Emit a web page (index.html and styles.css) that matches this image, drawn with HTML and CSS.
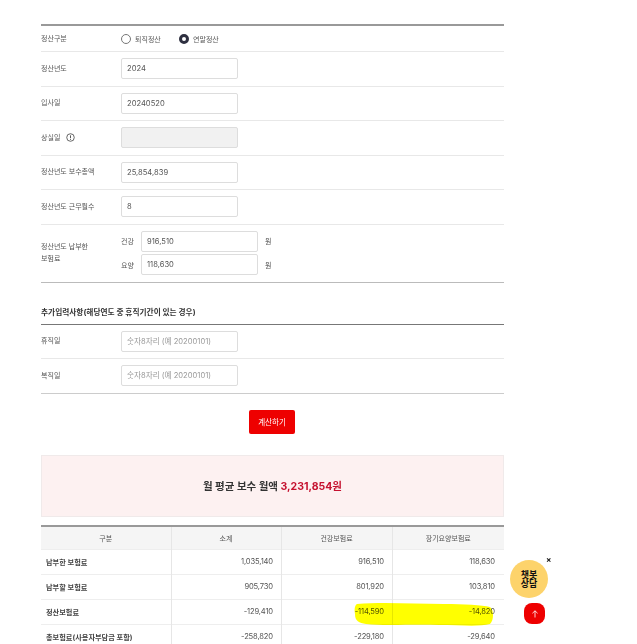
FILE: index.html
```html
<!DOCTYPE html>
<html lang="ko">
<head>
    <meta charset="UTF-8">
    <meta name="viewport" content="width=device-width, initial-scale=1.0">
    <title>보수월액 계산</title>
    <link rel="stylesheet" href="styles.css">
</head>
<body>
    <div class="container">
        <div class="form-table">
            <div class="form-row first-row">
                <div class="label">정산구분</div>
                <div class="field radios">
                    <span class="radio"></span><span class="radio-text">퇴직정산</span>
                    <span class="radio checked"></span><span class="radio-text">연말정산</span>
                </div>
            </div>
            <div class="form-row">
                <div class="label">정산년도</div>
                <div class="field"><input class="text-input" value="2024"></div>
            </div>
            <div class="form-row">
                <div class="label">입사일</div>
                <div class="field"><input class="text-input" value="20240520"></div>
            </div>
            <div class="form-row">
                <div class="label">상실일
                    <svg class="info-icon" viewBox="0 0 10 10">
                        <circle cx="5" cy="5" r="4.2" fill="none" stroke="#444" stroke-width="0.9"/>
                        <path d="M5 2.6V5.8M5 6.7V7.6" stroke="#444" stroke-width="1"/>
                    </svg>
                </div>
                <div class="field"><input class="text-input disabled" disabled></div>
            </div>
            <div class="form-row">
                <div class="label">정산년도 보수총액</div>
                <div class="field"><input class="text-input" value="25,854,839"></div>
            </div>
            <div class="form-row">
                <div class="label">정산년도 근무월수</div>
                <div class="field"><input class="text-input" value="8"></div>
            </div>
            <div class="form-row tall-row">
                <div class="label">정산년도 납부한<br>보험료</div>
                <div class="field pair-list">
                    <div class="pair">
                        <span class="pair-name">건강</span>
                        <input class="text-input" value="916,510">
                        <span class="unit">원</span>
                    </div>
                    <div class="pair">
                        <span class="pair-name">요양</span>
                        <input class="text-input" value="118,630">
                        <span class="unit">원</span>
                    </div>
                </div>
            </div>
        </div>

        <h3 class="section-title">추가입력사항(해당연도 중 휴직기간이 있는 경우)</h3>
        <div class="form-table section-table">
            <div class="form-row">
                <div class="label">휴직일</div>
                <div class="field"><input class="text-input" placeholder="숫자8자리 (예 20200101)"></div>
            </div>
            <div class="form-row">
                <div class="label">복직일</div>
                <div class="field"><input class="text-input" placeholder="숫자8자리 (예 20200101)"></div>
            </div>
        </div>

        <div class="button-row">
            <button class="calc-button">계산하기</button>
        </div>

        <div class="result-box">월 평균 보수 월액 <span class="result-value">3,231,854원</span></div>

        <div class="table-wrap">
            <table class="result-table">
                <colgroup>
                    <col class="col-name"><col class="col-sum"><col class="col-health"><col class="col-care">
                </colgroup>
                <thead>
                    <tr><th>구분</th><th>소계</th><th>건강보험료</th><th>장기요양보험료</th></tr>
                </thead>
                <tbody>
                    <tr><td>납부한 보험료</td><td>1,035,140</td><td>916,510</td><td>118,630</td></tr>
                    <tr><td>납부할 보험료</td><td>905,730</td><td>801,920</td><td>103,810</td></tr>
                    <tr><td>정산보험료</td><td>-129,410</td><td>-114,590</td><td>-14,820</td></tr>
                    <tr><td>총보험료(사용자부담금 포함)</td><td>-258,820</td><td>-229,180</td><td>-29,640</td></tr>
                </tbody>
            </table>
            <!-- Marker scribble over the settlement row -->
            <svg class="marker" viewBox="0 0 140 25">
                <path d="M3 2C30 0 60 2 90 2C110 2 128 3 136 5C140 8 140 18 136 22C125 25 105 23 85 23C60 22 30 24 12 22C5 21 1 19 1 12C0 7 1 3 3 2Z" fill="#ffff00"/>
            </svg>
        </div>
    </div>

    <div class="chat-bubble"><span class="chat-line">챗봇</span><span class="chat-line">상담</span></div>
    <span class="chat-close">×</span>
    <button class="top-button">
        <svg viewBox="0 0 10 10" class="top-arrow">
            <path d="M5 8.5V1.8M2.4 4.3L5 1.8L7.6 4.3" fill="none" stroke="#fff" stroke-width="0.8"/>
        </svg>
    </button>
</body>
</html>
```

FILE: styles.css
```css
html, body {
    height: 100%;
    overflow: hidden;
}
body {
    margin: 0;
    background-color: #ffffff;
    color: #555555;
    font-family: Inter, "Noto Sans CJK KR", sans-serif;
    font-size: 7px;
}
.container {
    width: 463px;
    margin-left: 41px;
    padding-top: 24px;
}
.form-table {
    border-top: 2px solid #999999;
}
.form-row {
    display: flex;
    align-items: center;
    height: 34.5px;
    border-bottom: 1px solid #e8e8e8;
    box-sizing: border-box;
}
.first-row {
    height: 26px;
}
.tall-row {
    height: 58px;
    border-bottom-color: #bbbbbb;
}
.label {
    width: 80px;
    line-height: 12px;
    display: flex;
    flex-wrap: wrap;
    align-items: center;
}
.field {
    flex: 1;
}
.radios {
    display: flex;
    align-items: center;
}
.radio {
    width: 10px;
    height: 10px;
    box-sizing: border-box;
    border: 1px solid #777777;
    border-radius: 50%;
}
.radio.checked {
    border: 3px solid #2e3040;
}
.radio-text {
    margin-left: 4px;
    width: 44px;
}
.text-input {
    width: 117px;
    height: 21px;
    box-sizing: border-box;
    padding: 0 5px;
    border: 1px solid #dddddd;
    border-radius: 2px;
    background-color: #ffffff;
    color: #555555;
    font-family: inherit;
    font-size: 7.6px;
    outline: none;
}
.text-input::placeholder {
    color: #999999;
}
.text-input.disabled {
    background-color: #f1f1f1;
}
.info-icon {
    width: 9px;
    height: 9px;
    margin-left: 6px;
}
.pair-list {
    display: flex;
    flex-direction: column;
    gap: 2.5px;
}
.pair {
    display: flex;
    align-items: center;
}
.pair-name {
    width: 20px;
}
.unit {
    margin-left: 7px;
}
.section-title {
    margin: 22.5px 0 3.5px;
    height: 15px;
    line-height: 15px;
    color: #333333;
    font-size: 7.7px;
    font-weight: 700;
}
.section-table {
    border-top: 1px solid #777777;
}
.section-table .form-row:last-child {
    border-bottom-color: #cccccc;
}
.button-row {
    display: flex;
    justify-content: center;
    margin-top: 16px;
    padding-right: 1px;
}
.calc-button {
    width: 46px;
    height: 24px;
    border: none;
    border-radius: 2px;
    background-color: #ee0000;
    color: #ffffff;
    font-family: inherit;
    font-size: 7.5px;
}
.result-box {
    margin-top: 21px;
    height: 62px;
    box-sizing: border-box;
    border: 1px solid #f0eaea;
    background-color: #fdf1f1;
    color: #333333;
    font-size: 10.5px;
    font-weight: 700;
    line-height: 62px;
    text-align: center;
}
.result-value {
    color: #c5112f;
}
.table-wrap {
    position: relative;
    margin-top: 8px;
}
.result-table {
    width: 100%;
    table-layout: fixed;
    border-collapse: collapse;
    border-top: 2px solid #999999;
}
.col-name { width: 130px; }
.col-sum { width: 110px; }
.col-health { width: 111px; }
.result-table th {
    height: 22px;
    padding: 0;
    background-color: #f5f5f5;
    font-weight: 400;
    border-left: 1px solid #e6e6e6;
}
.result-table td {
    height: 24px;
    padding: 0 7.5px;
    text-align: right;
    border-top: 1px solid #eeeeee;
    border-left: 1px solid #e6e6e6;
    font-size: 7.6px;
    letter-spacing: -0.15px;
}
.result-table td:last-child {
    padding-right: 9px;
}
.result-table th:first-child,
.result-table td:first-child {
    border-left: none;
}
.result-table td:first-child {
    padding: 0 5px;
    text-align: left;
    color: #444444;
    font-weight: 700;
    font-size: 7.2px;
    letter-spacing: 0;
}
.marker {
    position: absolute;
    left: 313px;
    top: 77px;
    width: 140px;
    height: 25px;
    mix-blend-mode: multiply;
}
.chat-bubble {
    position: fixed;
    left: 510px;
    top: 560px;
    width: 38px;
    height: 38px;
    box-sizing: border-box;
    display: flex;
    flex-direction: column;
    justify-content: center;
    border-radius: 50%;
    background-color: #fdd36b;
    color: #111111;
    font-size: 9px;
    font-weight: 700;
    text-align: center;
}
.chat-line {
    height: 9.5px;
    line-height: 9.5px;
}
.chat-close {
    position: fixed;
    left: 546px;
    top: 555px;
    color: #111111;
    font-size: 8px;
    font-weight: 700;
    line-height: 10px;
}
.top-button {
    position: fixed;
    left: 524px;
    top: 603px;
    width: 21px;
    height: 21px;
    padding: 0;
    border: none;
    border-radius: 8px;
    background-color: #ee0000;
}
.top-arrow {
    display: block;
    width: 10px;
    height: 10px;
    margin: auto;
}
```
